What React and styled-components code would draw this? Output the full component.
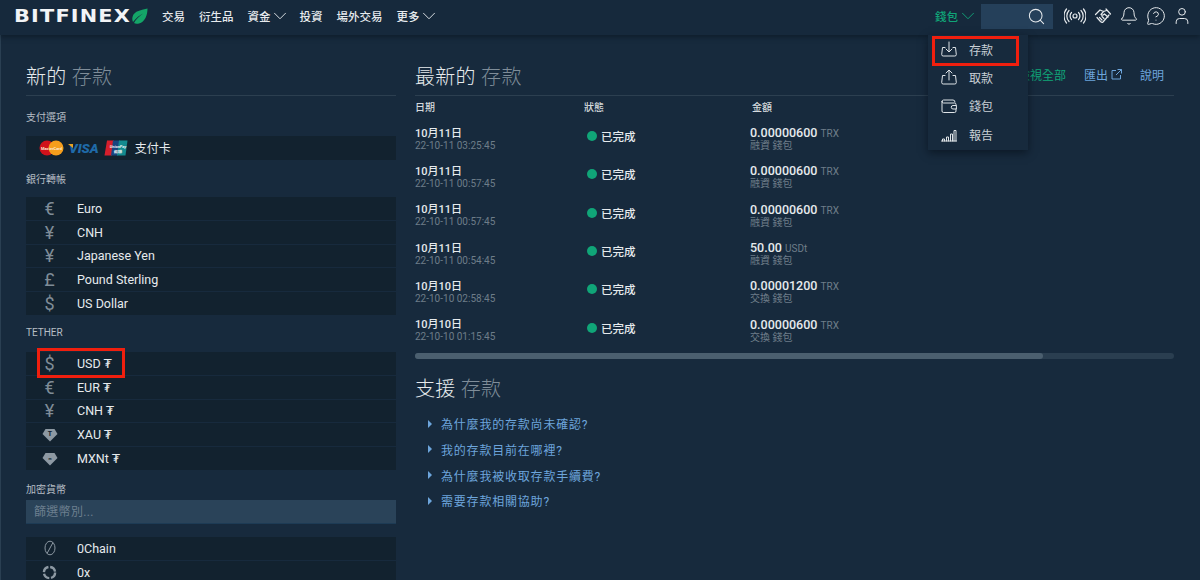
import React from "react";
import styled, { createGlobalStyle } from "styled-components";
import { ChevronDown, Search, Bell, User, MessageCircleQuestion } from "lucide-react";

const GlobalStyle = createGlobalStyle`
	html, body {
		margin: 0;
		padding: 0;
		background: #172a3d;
	}
	body {
		font-family: Roboto, "Noto Sans CJK TC", "DejaVu Sans", sans-serif;
		color: #e6eaed;
		overflow: hidden;
	}
	* {
		box-sizing: border-box;
	}
`;

const bankRows = [
	{ glyph: "€", name: "Euro" },
	{ glyph: "¥", name: "CNH" },
	{ glyph: "¥", name: "Japanese Yen" },
	{ glyph: "£", name: "Pound Sterling" },
	{ glyph: "$", name: "US Dollar" },
];

const tetherRows = [
	{ glyph: "$", name: "USD ₮" },
	{ glyph: "€", name: "EUR ₮" },
	{ glyph: "¥", name: "CNH ₮" },
	{ gem: "T", name: "XAU ₮" },
	{ gem: "m", name: "MXNt ₮" },
];

const deposits = [
	{ day: "10月11日", time: "22-10-11 03:25:45", amount: "0.00000600", unit: "TRX", wallet: "融資 錢包" },
	{ day: "10月11日", time: "22-10-11 00:57:45", amount: "0.00000600", unit: "TRX", wallet: "融資 錢包" },
	{ day: "10月11日", time: "22-10-11 00:57:45", amount: "0.00000600", unit: "TRX", wallet: "融資 錢包" },
	{ day: "10月11日", time: "22-10-11 00:54:45", amount: "50.00", unit: "USDt", wallet: "融資 錢包" },
	{ day: "10月10日", time: "22-10-10 02:58:45", amount: "0.00001200", unit: "TRX", wallet: "交換 錢包" },
	{ day: "10月10日", time: "22-10-10 01:15:45", amount: "0.00000600", unit: "TRX", wallet: "交換 錢包" },
];

const questions = [
	"為什麼我的存款尚未確認?",
	"我的存款目前在哪裡?",
	"為什麼我被收取存款手續費?",
	"需要存款相關協助?",
];

function Leaf() {
	return (
		<svg width="18" height="17" viewBox="0 0 18 17">
			<path d="M17.500 0.500C12 2 4 2.500 2.500 9C2 11 2.500 13 3 14C6 10 10 7 13 5.500C9 8.500 6 11 4 15C5 15.800 7 16 9 15.500C15 14 17.500 7 17.500 0.500Z" fill="#14a568" />
		</svg>
	);
}

function RadioIcon() {
	return (
		<svg width="22" height="18" viewBox="0 0 22 18" fill="none" stroke="#e6eaed" strokeWidth="1.2" strokeLinecap="round">
			<circle cx="11" cy="9" r="2" />
			<path d="M7.500 5.500a5 5 0 0 0 0 7M14.500 5.500a5 5 0 0 1 0 7M5 3.500a8 8 0 0 0 0 11M17 3.500a8 8 0 0 1 0 11M2.500 2a11 11 0 0 0 0 14M19.500 2a11 11 0 0 1 0 14" />
		</svg>
	);
}

function HandsIcon() {
	return (
		<svg width="20" height="18" viewBox="0 0 18 18" fill="none" stroke="#e6eaed" strokeWidth="1.200" strokeLinecap="round" strokeLinejoin="round">
			<path d="M1.500 7.500L6 3M6 3L9.500 4.500L12.500 3.500M12 2L16.500 7M15 8L9 15Q8 16 6.500 14.500L3 10.500M9.500 4.500L7 7.500Q8.500 9 10.500 7L14 10M8 13L5.500 10.500M10 11.500L8 9.500" />
		</svg>
	);
}

function MenuIcon({ kind }) {
	return (
		<svg width="16" height="16" viewBox="0 0 16 16" fill="none" stroke="#dfe4e8" strokeWidth="1" strokeLinecap="round" strokeLinejoin="round">
			{kind === "in" && <path d="M4 6.500H1.500L0.700 13.500a1.500 1.500 0 0 0 1.500 1.500h11.600a1.500 1.500 0 0 0 1.500-1.500L14.500 6.500H12M8 1v9.500M5 8l3 3 3-3" />}
			{kind === "out" && <path d="M4 6.500H1.500L0.700 13.500a1.500 1.500 0 0 0 1.500 1.500h11.600a1.500 1.500 0 0 0 1.500-1.500L14.500 6.500H12M8 11V1.500M5 4l3-3 3 3" />}
			{kind === "wallet" && <path d="M1 3.500A1.500 1.500 0 0 1 2.500 2H12a2 2 0 0 1 2 2M1 3.500V13a1.500 1.500 0 0 0 1.500 1.500h11A1.500 1.500 0 0 0 15 13V11M1 3.500a1.500 1.500 0 0 0 1.500 1.500h11A1.500 1.500 0 0 1 15 6.500V7.500M15 7.500h-3a1.500 1.500 0 0 0 0 3.500h3z" />}
			{kind === "report" && <path d="M0.500 15h15M1.500 15v-2h2v2M5.500 15v-4h2v4M9.500 15V8h2v7M13 15V4.500h2V15" />}
		</svg>
	);
}

function Gem({ label }) {
	return (
		<svg width="16" height="14" viewBox="0 0 16 14">
			<path d="M3.500 1H12.500L15.500 6L8 13.500L0.500 6Z" fill="#8d99a3" />
			<text x="8" y="8" textAnchor="middle" fontSize={label === "T" ? 7 : 3.500} fontFamily="Roboto" fontWeight="700" fill="#12222f">{label}</text>
		</svg>
	);
}

function ZeroChain() {
	return (
		<svg width="14" height="16" viewBox="0 0 14 16" fill="none" stroke="#8d99a3" strokeWidth="1">
			<ellipse cx="7" cy="8" rx="5" ry="6.800" />
			<path d="M10 2.500L4 13.500" />
		</svg>
	);
}

function ZeroX() {
	return (
		<svg width="15" height="15" viewBox="0 0 15 15" fill="none" stroke="#8d99a3" strokeWidth="2.400">
			<circle cx="7.500" cy="7.500" r="5.600" strokeDasharray="7 1.800" />
		</svg>
	);
}

function CardLogos() {
	return (
		<Logos>
			<svg width="25" height="16" viewBox="0 0 25 16">
				<circle cx="8" cy="8" r="7.500" fill="#d0121b" />
				<circle cx="17" cy="8" r="7.500" fill="#f59e1c" />
				<text x="12.500" y="9.500" textAnchor="middle" fontSize="4" fontWeight="700" fontFamily="Roboto" fill="#fbe9d0">MasterCard</text>
			</svg>
			<VisaMark>VISA</VisaMark>
			<svg width="24" height="16" viewBox="0 0 24 16">
				<path d="M3 0.500H10L8 15.500H0.500Z" fill="#d61f2c" />
				<path d="M9 0.500H16L14 15.500H7Z" fill="#17457f" />
				<path d="M15 0.500H23.500L21.500 15.500H13Z" fill="#138a8f" />
				<text x="14" y="7.500" textAnchor="middle" fontSize="4" fontStyle="italic" fontWeight="700" fontFamily="Roboto" fill="#e8f0f2">UnionPay</text>
				<text x="14" y="13" textAnchor="middle" fontSize="3.500" fontWeight="700" fontFamily="Roboto" fill="#e8f0f2">銀聯</text>
			</svg>
		</Logos>
	);
}

function CoinRow({ row }) {
	return (
		<CoinItem>
			<CoinIcon>
				{row.glyph}
				{row.gem && <Gem label={row.gem} />}
				{row.chain && <ZeroChain />}
				{row.ring && <ZeroX />}
			</CoinIcon>
			<CoinName>{row.name}</CoinName>
		</CoinItem>
	);
}

export default function App() {
	return (
		<Page>
			<GlobalStyle />
			<Header>
				<Brand>
					<BrandName>BITFINEX</BrandName>
					<Leaf />
				</Brand>
				<Nav>
					<NavItem>交易</NavItem>
					<NavItem>衍生品</NavItem>
					<NavItem>資金<Chevron /></NavItem>
					<NavItem>投資</NavItem>
					<NavItem>場外交易</NavItem>
					<NavItem>更多<Chevron /></NavItem>
				</Nav>
				<HeaderRight>
					<WalletToggle>錢包<Chevron /></WalletToggle>
					<SearchBox><Search size={19} strokeWidth={1.3} /></SearchBox>
					<IconRow>
						<RadioIcon />
						<HandsIcon />
						<Bell size={20} strokeWidth={1.2} />
						<MessageCircleQuestion size={20} strokeWidth={1.2} />
						<User size={20} strokeWidth={1.2} />
					</IconRow>
				</HeaderRight>
			</Header>

			<Dropdown>
				<MenuItem><MenuIcon kind="in" />存款<RedBox $menu /></MenuItem>
				<MenuItem><MenuIcon kind="out" />取款</MenuItem>
				<MenuItem><MenuIcon kind="wallet" />錢包</MenuItem>
				<MenuItem><MenuIcon kind="report" />報告</MenuItem>
			</Dropdown>

			<Columns>
				<LeftColumn>
					<SectionTitle>新的 <Dim>存款</Dim></SectionTitle>
					<GroupLabel $first>支付選項</GroupLabel>
					<CardRow>
						<CardLogos />
						<CardLabel>支付卡</CardLabel>
					</CardRow>
					<GroupLabel>銀行轉帳</GroupLabel>
					<CoinList>
						{bankRows.map((row) => <CoinRow key={row.name} row={row} />)}
					</CoinList>
					<GroupLabel>TETHER</GroupLabel>
					<CoinList>
						<RedBox />
						{tetherRows.map((row) => <CoinRow key={row.name} row={row} />)}
					</CoinList>
					<GroupLabel $filter>加密貨幣</GroupLabel>
					<FilterInput placeholder="篩選幣別..." />
					<CoinList>
						<CoinRow row={{ chain: true, name: "0Chain" }} />
						<CoinRow row={{ ring: true, name: "0x" }} />
					</CoinList>
				</LeftColumn>

				<RightColumn>
					<TitleBar>
						<SectionTitle $bare>最新的 <Dim>存款</Dim></SectionTitle>
						<Actions>
							<ActionLink $green>檢視全部</ActionLink>
							<ActionLink>匯出 <ExportIcon /></ActionLink>
							<ActionLink>說明</ActionLink>
						</Actions>
					</TitleBar>
					<TableHead>
						<span>日期</span>
						<span>狀態</span>
						<span>金額</span>
					</TableHead>
					{deposits.map((d, i) => (
						<TableRow key={i}>
							<div>
								<Primary $date>{d.day}</Primary>
								<Secondary>{d.time}</Secondary>
							</div>
							<Status><Dot />已完成</Status>
							<Amount>
								<Primary>{d.amount} <Unit>{d.unit}</Unit></Primary>
								<Secondary>{d.wallet}</Secondary>
							</Amount>
						</TableRow>
					))}
					<ScrollTrack><ScrollThumb /></ScrollTrack>
					<SupportTitle>支援 <Dim>存款</Dim></SupportTitle>
					<Questions>
						{questions.map((q) => (
							<Question key={q}><Caret />{q}</Question>
						))}
					</Questions>
				</RightColumn>
			</Columns>
		</Page>
	);
}

function ExportIcon() {
	return (
		<svg width="11" height="11" viewBox="0 0 11 11" fill="none" stroke="#6da5dc" strokeWidth="1">
			<path d="M5 1.500H1V10H9.500V6M6.500 0.500H10.500V4.500M10.500 0.500L5 6" />
		</svg>
	);
}

const Page = styled.div`
	position: relative;
	width: 1200px;
	height: 580px;
	overflow: hidden;
	background: #172a3d;
	box-shadow: inset 1px 0 0 #2a3f52;
`;

const Header = styled.header`
	display: flex;
	align-items: center;
	height: 35px;
	padding: 0 8px 3px 14px;
	background: #16293c;
	box-shadow: 0 2px 5px rgba(8, 18, 28, 0.55);
`;

const Brand = styled.div`
	display: flex;
	align-items: center;
	gap: 1px;
	width: 148px;
`;

const BrandName = styled.span`
	display: inline-block;
	width: 115px;
	font-family: "DejaVu Sans", sans-serif;
	font-size: 17.500px;
	font-weight: 700;
	letter-spacing: 1px;
	white-space: nowrap;
	color: #f2f4f6;
	transform: scaleX(1.19);
	transform-origin: left center;
`;

const Nav = styled.nav`
	display: flex;
	gap: 14px;
`;

const NavItem = styled.span`
	display: flex;
	align-items: center;
	font-size: 11.500px;
	font-weight: 500;
	color: #e6eaed;
`;

const Chevron = styled(ChevronDown).attrs({ size: 22, strokeWidth: 1 })`
	margin: 0 -5.500px 0 -1.500px;
`;

const HeaderRight = styled.div`
	display: flex;
	align-items: center;
	margin-left: auto;
`;

const WalletToggle = styled.span`
	display: flex;
	align-items: center;
	width: 46px;
	height: 16px;
	font-size: 11.500px;
	font-weight: 500;
	color: #10a578;
`;

const SearchBox = styled.div`
	display: flex;
	align-items: center;
	justify-content: flex-end;
	width: 72px;
	height: 25px;
	padding-right: 7px;
	background: #25405a;
	color: #e6eaed;
`;

const IconRow = styled.div`
	display: flex;
	align-items: center;
	gap: 6.500px;
	margin-left: 11px;
	color: #e6eaed;
`;

const Dropdown = styled.div`
	position: absolute;
	z-index: 5;
	top: 35px;
	left: 928px;
	width: 100px;
	height: 115px;
	background: #172a3d;
	box-shadow: 0 3px 8px rgba(5, 14, 24, 0.6);
`;

const MenuItem = styled.div`
	position: relative;
	display: flex;
	align-items: center;
	gap: 12px;
	height: 28.300px;
	padding-left: 13px;
	font-size: 12px;
	color: #c9d0d6;
`;

const RedBox = styled.span`
	position: absolute;
	z-index: 3;
	border: 3px solid #f01f0e;
	pointer-events: none;
	${(p) =>
		p.$menu
			? `top: 1px; left: 4px; width: 87px; height: 30px;`
			: `top: -4px; left: 11px; width: 88px; height: 30px;`}
`;

const Columns = styled.main`
	display: flex;
	gap: 19px;
	padding: 20px 26px 0;
`;

const LeftColumn = styled.section`
	flex: 0 0 370px;
`;

const RightColumn = styled.section`
	flex: 0 0 759px;
`;

const SectionTitle = styled.h2`
	margin: 0;
	height: 41px;
	font-size: 20px;
	font-weight: 300;
	letter-spacing: 0.300px;
	line-height: 45px;
	color: #e6eaed;
	${(p) => !p.$bare && `border-bottom: 1px solid #2c3f50;`}
`;

const Dim = styled.span`
	color: #7f8d99;
`;

const GroupLabel = styled.div`
	display: flex;
	align-items: center;
	height: 18px;
	margin: ${(p) => (p.$first ? "11px 0 11px" : p.$filter ? "10px 0 2px" : "9px 0 10px")};
	font-size: 10px;
	color: #b6bec5;
`;

const CardRow = styled.div`
	display: flex;
	align-items: center;
	height: 24px;
	padding: 0 0 0 13px;
	background: #12222f;
`;

const Logos = styled.div`
	display: flex;
	align-items: center;
	gap: 5px;
	margin-right: 7px;
`;

const VisaMark = styled.span`
	position: relative;
	font-size: 13.500px;
	font-style: italic;
	font-weight: 900;
	color: #1f6aa8;
	&::before {
		content: "";
		position: absolute;
		top: 4px;
		left: -1px;
		border-top: 4px solid #e8a323;
		border-left: 5px solid transparent;
	}
`;

const CardLabel = styled.span`
	margin-top: -2px;
	font-size: 12px;
	color: #e6eaed;
`;

const CoinList = styled.div`
	position: relative;
	display: flex;
	flex-direction: column;
	gap: 1px;
`;

const CoinItem = styled.div`
	display: flex;
	align-items: center;
	height: 22.800px;
	background: #12222f;
`;

const CoinIcon = styled.span`
	display: flex;
	align-items: center;
	justify-content: center;
	width: 47px;
	font-size: 18px;
	font-weight: 400;
	color: #7f8c97;
`;

const CoinName = styled.span`
	margin-left: 4px;
	font-size: 12.500px;
	color: #e6eaed;
`;

const FilterInput = styled.input`
	display: block;
	width: 100%;
	height: 24px;
	margin-bottom: 13px;
	padding: 2px 8px 0;
	border: 0;
	border-bottom: 1px solid #1d3b55;
	background: #2a4359;
	font-family: inherit;
	font-size: 12px;
	letter-spacing: 0.300px;
	color: #e6eaed;
	&::placeholder {
		color: #6c7f8f;
	}
`;

const TitleBar = styled.div`
	display: flex;
	align-items: center;
	justify-content: space-between;
	height: 41px;
	border-bottom: 1px solid #2c3f50;
`;

const Actions = styled.div`
	display: flex;
	gap: 18px;
	margin-top: -2px;
	padding-right: 10px;
`;

const ActionLink = styled.span`
	font-size: 12px;
	color: ${(p) => (p.$green ? "#10a578" : "#6da5dc")};
`;

const tableColumns = `
	display: grid;
	grid-template-columns: 169px 168px 1fr;
`;

const TableHead = styled.div`
	${tableColumns}
	height: 24px;
	padding-bottom: 4px;
	align-items: center;
	font-size: 10px;
	font-weight: 500;
	color: #d5dade;
`;

const TableRow = styled.div`
	${tableColumns}
	height: 38.300px;
	align-items: center;
`;

const Primary = styled.div`
	font-size: ${(p) => (p.$date ? "11px" : "12.500px")};
	font-weight: 500;
	line-height: 13px;
	color: #e6eaed;
`;

const Secondary = styled.div`
	font-size: 10px;
	line-height: 12px;
	color: #6e7d89;
`;

const Status = styled.div`
	display: flex;
	align-items: center;
	gap: 4px;
	margin-bottom: 6px;
	padding-left: 3px;
	font-size: 11.500px;
	font-weight: 500;
	color: #e6eaed;
`;

const Dot = styled.i`
	width: 10px;
	height: 10px;
	border-radius: 50%;
	background: #10a578;
`;

const Amount = styled.div`
	margin-left: -2px;
`;

const Unit = styled.span`
	font-size: 10px;
	font-weight: 400;
	color: #6e7d89;
`;

const ScrollTrack = styled.div`
	height: 6px;
	margin-top: 3px;
	border-radius: 3px;
	background: #2a3e50;
`;

const ScrollThumb = styled.div`
	width: 628px;
	height: 100%;
	border-radius: 3px;
	background: #4b5f6f;
`;

const SupportTitle = styled.h2`
	margin: 16px 0 7px;
	height: 29px;
	font-size: 20px;
	font-weight: 300;
	letter-spacing: 0.300px;
	line-height: 29px;
	color: #e6eaed;
`;

const Questions = styled.ul`
	margin: 0;
	padding: 0 0 0 13px;
	list-style: none;
`;

const Question = styled.li`
	display: flex;
	align-items: center;
	gap: 9px;
	height: 25.700px;
	font-size: 12px;
	letter-spacing: 0.800px;
	color: #6da5dc;
`;

const Caret = styled.i`
	width: 0;
	height: 0;
	border-top: 4px solid transparent;
	border-bottom: 4px solid transparent;
	border-left: 4px solid #6da5dc;
`;
